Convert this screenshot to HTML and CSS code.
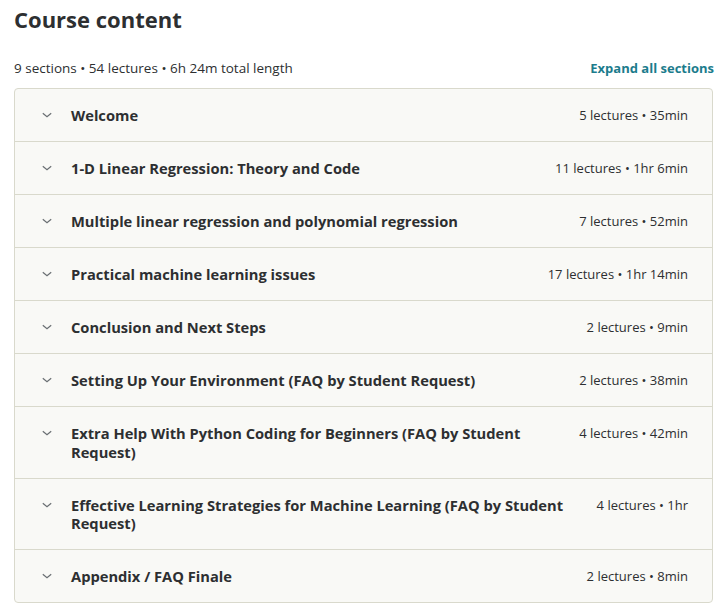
FILE: index.html
```html
<!DOCTYPE html>
<html lang="en">
<head>
<meta charset="utf-8">
<title>Course content</title>
<link rel="stylesheet" href="styles.css">
</head>
<body>
<div class="page">
  <h2 class="heading">Course content</h2>
  <div class="meta">
    <span class="meta-text">9 sections • 54 lectures • 6h 24m total length</span>
    <a class="expand" href="#">Expand all sections</a>
  </div>
  <div class="sections">
    <div class="section">
      <span class="chev"><svg width="16" height="16" viewBox="0 0 16 16"><path d="M3.8 6.2 L8 9.8 L12.2 6.2" fill="none" stroke="currentColor" stroke-width="1.2"/></svg></span>
      <span class="title">Welcome</span>
      <span class="info">5 lectures • 35min</span>
    </div>
    <div class="section">
      <span class="chev"><svg width="16" height="16" viewBox="0 0 16 16"><path d="M3.8 6.2 L8 9.8 L12.2 6.2" fill="none" stroke="currentColor" stroke-width="1.2"/></svg></span>
      <span class="title">1-D Linear Regression: Theory and Code</span>
      <span class="info">11 lectures • 1hr 6min</span>
    </div>
    <div class="section">
      <span class="chev"><svg width="16" height="16" viewBox="0 0 16 16"><path d="M3.8 6.2 L8 9.8 L12.2 6.2" fill="none" stroke="currentColor" stroke-width="1.2"/></svg></span>
      <span class="title">Multiple linear regression and polynomial regression</span>
      <span class="info">7 lectures • 52min</span>
    </div>
    <div class="section">
      <span class="chev"><svg width="16" height="16" viewBox="0 0 16 16"><path d="M3.8 6.2 L8 9.8 L12.2 6.2" fill="none" stroke="currentColor" stroke-width="1.2"/></svg></span>
      <span class="title">Practical machine learning issues</span>
      <span class="info">17 lectures • 1hr 14min</span>
    </div>
    <div class="section">
      <span class="chev"><svg width="16" height="16" viewBox="0 0 16 16"><path d="M3.8 6.2 L8 9.8 L12.2 6.2" fill="none" stroke="currentColor" stroke-width="1.2"/></svg></span>
      <span class="title">Conclusion and Next Steps</span>
      <span class="info">2 lectures • 9min</span>
    </div>
    <div class="section">
      <span class="chev"><svg width="16" height="16" viewBox="0 0 16 16"><path d="M3.8 6.2 L8 9.8 L12.2 6.2" fill="none" stroke="currentColor" stroke-width="1.2"/></svg></span>
      <span class="title">Setting Up Your Environment (FAQ by Student Request)</span>
      <span class="info">2 lectures • 38min</span>
    </div>
    <div class="section">
      <span class="chev"><svg width="16" height="16" viewBox="0 0 16 16"><path d="M3.8 6.2 L8 9.8 L12.2 6.2" fill="none" stroke="currentColor" stroke-width="1.2"/></svg></span>
      <span class="title">Extra Help With Python Coding for Beginners (FAQ by Student Request)</span>
      <span class="info">4 lectures • 42min</span>
    </div>
    <div class="section">
      <span class="chev"><svg width="16" height="16" viewBox="0 0 16 16"><path d="M3.8 6.2 L8 9.8 L12.2 6.2" fill="none" stroke="currentColor" stroke-width="1.2"/></svg></span>
      <span class="title">Effective Learning Strategies for Machine Learning (FAQ by Student Request)</span>
      <span class="info">4 lectures • 1hr</span>
    </div>
    <div class="section">
      <span class="chev"><svg width="16" height="16" viewBox="0 0 16 16"><path d="M3.8 6.2 L8 9.8 L12.2 6.2" fill="none" stroke="currentColor" stroke-width="1.2"/></svg></span>
      <span class="title">Appendix / FAQ Finale</span>
      <span class="info">2 lectures • 8min</span>
    </div>
  </div>
</div>
</body>
</html>
```
FILE: styles.css
```css
* { box-sizing: border-box; }
body {
  margin: 0;
  background: #ffffff;
  color: #2d2f31;
  font-family: "Open Sans", "Noto Sans", sans-serif;
}
.page {
  padding: 0 10px 0 14px;
}
.heading {
  margin: 5px 0 0 0;
  font-size: 22px;
  line-height: 28px;
  font-weight: 700;
  color: #2d2f31;
}
.meta {
  display: flex;
  justify-content: space-between;
  align-items: baseline;
  margin-top: 25px;
  height: 20px;
  line-height: 20px;
  margin-right: -1px;
}
.meta-text {
  font-size: 13.5px;
  color: #2d2f31;
}
.expand {
  font-size: 13px;
  font-weight: 700;
  color: #1c7c8c;
  text-decoration: none;
}
.sections {
  margin-top: 10px;
  border: 1px solid #d9d9cc;
  border-radius: 4px;
  background: #f9f9f6;
}
.section {
  display: flex;
  align-items: flex-start;
  padding: 17px 24px 16.5px 24px;
  border-top: 1px solid #d9d9cc;
}
.section:first-child {
  border-top: none;
}
.chev {
  flex: none;
  width: 16px;
  height: 18.5px;
  display: flex;
  align-items: center;
  color: #6a6f73;
  margin-right: 16px;
}
.title {
  flex: 1;
  font-size: 14.7px;
  line-height: 18.5px;
  font-weight: 700;
  color: #2d2f31;
}
.info {
  flex: none;
  margin-left: 16px;
  font-size: 13px;
  line-height: 18.5px;
  color: #2d2f31;
}
```
